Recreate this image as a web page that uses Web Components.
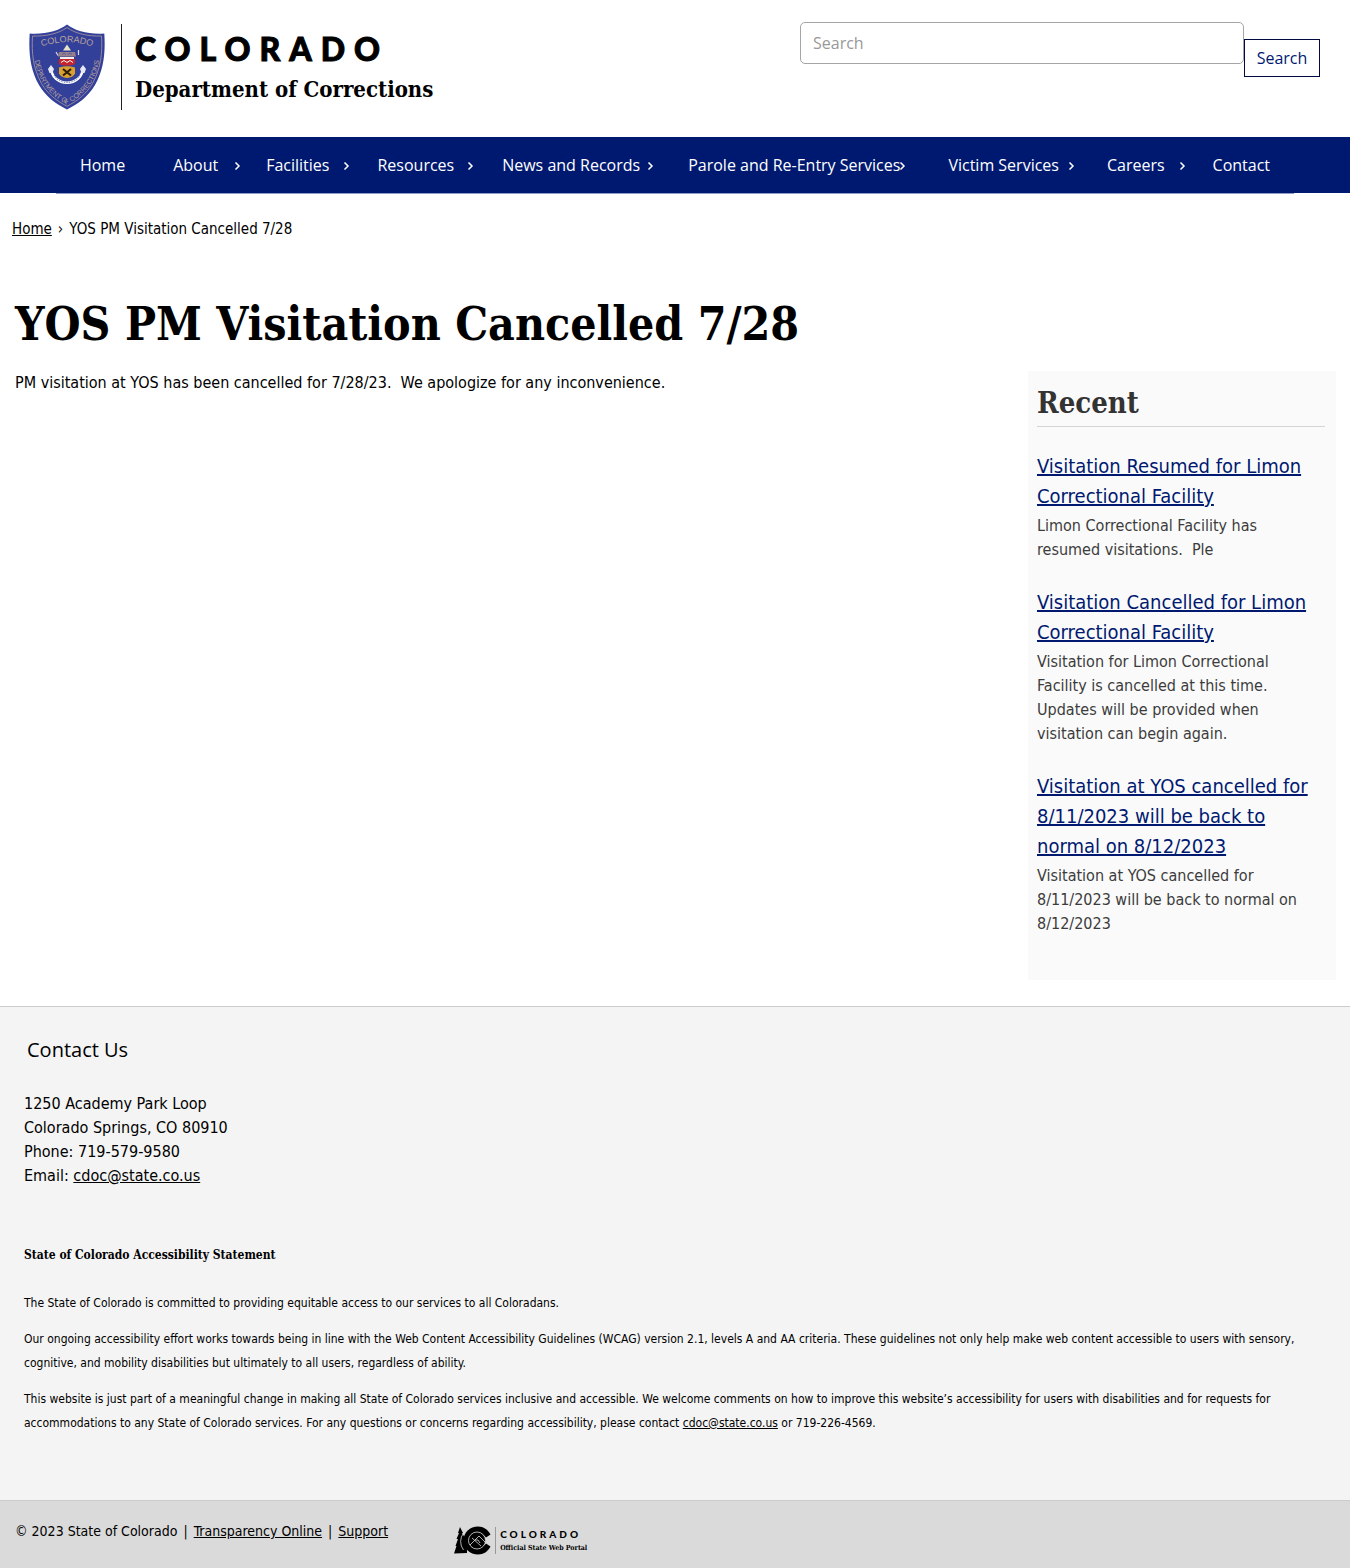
<!DOCTYPE html>
<html lang="en">
<head>
<meta charset="utf-8">
<title>YOS PM Visitation Cancelled 7/28 | Department of Corrections</title>
<style>
  body {
    margin: 0;
    background: #fff;
    color: #000;
    font: 16px/24px "DejaVu Sans Condensed", "Trebuchet MS", sans-serif;
    --sans: "Open Sans", sans-serif;
    --slab: "DejaVu Serif Condensed", "DejaVu Serif", serif;
    --navy: #001970;
  }
</style>
</head>
<body>
<site-page></site-page>

<template id="t-shield">
  <style>
    :host { display: block; width: 76px; height: 86px; flex: none; }
    svg { display: block; width: 100%; height: 100%; }
    text { font-family: "Liberation Sans", sans-serif; fill: #b8a29a; text-anchor: middle; }
  </style>
  <svg viewBox="0 0 76 86" role="img" aria-label="Colorado Department of Corrections badge">
    <defs>
      <path id="top" d="M7 24.500 Q22 18.500 38 18 Q54 18.500 69 24.500"/>
      <path id="around" d="M5 23 C4 48 16 70 38 80 C60 70 72 48 71 23"/>
    </defs>
    <path d="M38 .5 C30 7 16 10.500 .7 9.500 C-.5 28 1 45 10 61 C17 73 27 80 38 85.500 C49 80 59 73 66 61 C75 45 76.500 28 75.300 9.500 C60 10.500 46 7 38 .5Z" fill="#33409a"/>
    <path d="M38 3.500 C30 9.500 17 12.500 3.500 12 C2.500 29 4 44 12.500 59.500 C19 70.500 28 77 38 82.300 C48 77 57 70.500 63.500 59.500 C72 44 73.500 29 72.500 12 C59 12.500 46 9.500 38 3.500Z" fill="none" stroke="#96879f" stroke-width="1"/>
    <text font-size="9"><textPath href="#top" startOffset="50%">COLORADO</textPath></text>
    <text font-size="7"><textPath href="#around" startOffset="50%">DEPARTMENT OF CORRECTIONS</textPath></text>
    <path d="M22 43 C22 64 54 64 54 43" fill="none" stroke="#fff" stroke-width="2.500"/>
    <path d="M25 51 C30 61 46 61 51 51" fill="none" stroke="#33409a" stroke-width=".6" stroke-dasharray="1.500 1"/>
    <path d="M19 45 l3-4 3 4 -1.500 4 h-3z M51 45 l3-4 3 4 -1.500 4 h-3z" fill="#e6e9f5"/>
    <path d="M38 20.500 l4 6 h-8z" fill="#e8e2c8"/>
    <path d="M30 28 h16 l1 4.500 h-18z" fill="#97808a"/>
    <path d="M33 30.500 l2-1.500 2 1.500 M39 30.500 l2-1.500 2 1.500" fill="none" stroke="#5660a5" stroke-width="1"/>
    <path d="M27 28 l2 3.500 M49.500 26 v5" stroke="#d8d8ee" stroke-width="1.200"/>
    <path d="M31 33 h14 v2 h-14z" fill="#f5f0f0"/>
    <path d="M30 35 h16 v5 c-5 2-11 2-16 0z" fill="#c7242c"/>
    <path d="M32 38.500 l3-2 3 2 3-2 3 2" fill="none" stroke="#fff" stroke-width="1"/>
    <path d="M30 43.500 q8-2.500 16 0 v6 q-2 4-8 4.500 q-6-.5-8-4.500z" fill="#d9a02e"/>
    <path d="M34 45 l8 6.500 M42 45 l-8 6.500" stroke="#2a1c10" stroke-width="2"/>
  </svg>
</template>

<template id="t-brand">
  <style>
    :host { display: block; }
    a { display: flex; color: #000; text-decoration: none; }
    .words { margin-left: 16px; padding-left: 13px; border-left: 1px solid #222; display: flex; flex-direction: column; gap: 4px; }
    .state { font: 900 32px/40px Lato, sans-serif; letter-spacing: 9px; padding-top: 5px; -webkit-text-stroke: 1px #000; }
    .dept { font: bold 22px/32px var(--slab); white-space: nowrap; }
  </style>
  <a href="#">
    <state-shield></state-shield>
    <span class="words"><span class="state">COLORADO</span><span class="dept">Department of Corrections</span></span>
  </a>
</template>

<template id="t-search">
  <style>
    :host { display: block; flex: 0 1 520px; }
    form { display: flex; align-items: flex-start; }
    input { flex: 1; min-width: 0; box-sizing: border-box; height: 42px; padding: 0 12px; border: 1px solid #a5a5a5; border-radius: 5px; background: #fff; font: 16px var(--sans); }
    input::placeholder { color: #999; opacity: 1; }
    button { width: 76px; height: 38px; margin-top: 17px; padding: 0; border: 1px solid #000940; background: #fff; color: var(--navy); font: 16px var(--sans); }
  </style>
  <form role="search" onsubmit="return false">
    <input type="search" placeholder="Search" aria-label="Search">
    <button type="submit">Search</button>
  </form>
</template>

<template id="t-header">
  <style>
    :host { display: flex; justify-content: space-between; align-items: flex-start; box-sizing: border-box; height: 137px; padding: 22px 30px 0 29px; }
    site-brand { padding-top: 2px; }
  </style>
  <site-brand></site-brand>
  <site-search></site-search>
</template>

<template id="t-nav-item">
  <style>
    :host { display: block; position: relative; }
    a { display: block; padding: 0 24px; font: 16px/56px var(--sans); color: #fff; text-decoration: none; white-space: nowrap; }
    svg { display: none; position: absolute; left: 90%; top: 24px; width: 8px; height: 10px; }
    :host([menu]) svg { display: block; }
  </style>
  <a href="#"><slot></slot></a>
  <svg viewBox="0 0 8 10" aria-hidden="true"><path d="M2.500 1.500 L6 5 L2.500 8.500" fill="none" stroke="#fff" stroke-width="1.500"/></svg>
</template>

<template id="t-nav">
  <style>
    :host { display: block; background: linear-gradient(var(--navy), var(--navy)) 0 0 / 100% 56px no-repeat; }
    nav { display: flex; justify-content: center; width: fit-content; margin: 0 auto; border-bottom: 1px solid #8f9bc4; }
  </style>
  <nav aria-label="Main">
    <nav-item>Home</nav-item>
    <nav-item menu>About</nav-item>
    <nav-item menu>Facilities</nav-item>
    <nav-item menu>Resources</nav-item>
    <nav-item menu>News and Records</nav-item>
    <nav-item menu>Parole and Re-Entry Services</nav-item>
    <nav-item menu>Victim Services</nav-item>
    <nav-item menu>Careers</nav-item>
    <nav-item>Contact</nav-item>
  </nav>
</template>

<template id="t-crumbs">
  <style>
    :host { display: block; padding: 23px 12px; font-size: 15px; }
    nav { display: flex; gap: 6px; }
    a { color: #000; }
  </style>
  <nav aria-label="Breadcrumb"><a href="#">Home</a><span>›</span><span>YOS PM Visitation Cancelled 7/28</span></nav>
</template>

<template id="t-recent-item">
  <style>
    :host { display: block; margin-bottom: 25px; }
    h3 { margin: 0 0 3px; font-size: 20px; line-height: 30px; font-weight: normal; }
    a { color: var(--navy); }
    p { margin: 0; padding-right: 12px; color: #3c3c3c; }
  </style>
  <h3><a href="#"><slot name="title"></slot></a></h3>
  <p><slot></slot></p>
</template>

<template id="t-recent">
  <style>
    :host { display: block; background: #fafafa; padding: 12px 11px 19px 9px; }
    h2 { margin: 0 0 24px; padding-bottom: 3px; border-bottom: 1px solid #d4d4d4; font: bold 29px/40px var(--slab); color: #333; }
  </style>
  <h2>Recent</h2>
  <recent-item><span slot="title">Visitation Resumed for Limon Correctional Facility</span>Limon Correctional Facility has resumed visitations.&nbsp; Ple</recent-item>
  <recent-item><span slot="title">Visitation Cancelled for Limon Correctional Facility</span>Visitation for Limon Correctional Facility is cancelled at this time. Updates will be provided when visitation can begin again.</recent-item>
  <recent-item><span slot="title">Visitation at YOS cancelled for 8/11/2023 will be back to normal on 8/12/2023</span>Visitation at YOS cancelled for 8/11/2023 will be back to normal on 8/12/2023</recent-item>
</template>

<template id="t-contact">
  <style>
    :host { display: block; padding: 28px 24px 65px; border-top: 1px solid #ccc; background: #f4f4f4; }
    h2 { margin: 0 0 27px; padding-left: 3px; font: 20px/30px var(--sans); }
    address { font-style: normal; }
    h3 { margin: 55px 0 24px; font: bold 12px/24px var(--slab); }
    p { margin: 0 0 12px; font-size: 12px; }
    p:last-child { margin-bottom: 0; }
    a { color: #000; }
  </style>
  <h2>Contact Us</h2>
  <address>1250 Academy Park Loop<br>Colorado Springs, CO 80910<br>Phone: 719-579-9580<br>Email: <a href="#">cdoc@state.co.us</a></address>
  <h3>State of Colorado Accessibility Statement</h3>
  <p>The State of Colorado is committed to providing equitable access to our services to all Coloradans.</p>
  <p>Our ongoing accessibility effort works towards being in line with the Web Content Accessibility Guidelines (WCAG) version 2.1, levels A and AA criteria. These guidelines not only help make web content accessible to users with sensory, cognitive, and mobility disabilities but ultimately to all users, regardless of ability.</p>
  <p>This website is just part of a meaningful change in making all State of Colorado services inclusive and accessible. We welcome comments on how to improve this website’s accessibility for users with disabilities and for requests for accommodations to any State of Colorado services. For any questions or concerns regarding accessibility, please contact <a href="#">cdoc@state.co.us</a> or 719-226-4569.</p>
</template>

<template id="t-portal">
  <style>
    :host { display: block; }
    a { display: flex; align-items: center; color: #000; text-decoration: none; }
    svg { width: 37px; height: 29px; }
    .words { display: flex; flex-direction: column; margin-left: 4px; padding-left: 4px; border-left: 1px solid #999; white-space: nowrap; }
    .state { font: 900 10px/15px Lato, sans-serif; letter-spacing: 3px; }
    .sub { font: bold 7px/12px var(--slab); }
  </style>
  <a href="#">
    <svg viewBox="0 0 37 29" aria-hidden="true">
      <path d="M6 1 L9 7 L8 7 L11 12 L13 12 L13 27 L0 27.500 L2.500 20 L1.500 20 L4 13 L2.500 13 L5 7 L4 7Z"/>
      <path d="M36.500 8.500 L32 11.500 C30 8.500 27 7.500 24 8 C20 9 18 12 18.500 15.500 C19 19 22 21 25 21 C28 21 30.500 19.500 32 17.500 L36.500 20.500 C34 25.500 29.500 28.500 24 28.500 C16 28.500 9.500 22.500 9.500 14.500 C9.500 6.500 16 .5 24 .5 C29.500 .5 34 3.500 36.500 8.500Z"/>
      <circle cx="23" cy="14.500" r="8.500" stroke="#dadada" stroke-width=".8"/>
      <path d="M9.500 24 A14 14 0 0 1 9.500 7" fill="none" stroke="#dadada" stroke-width=".8"/>
      <path d="M16 19 L25 10 L31 16 M18 12 L27 20 M21 14 L24 14 L26 17" fill="none" stroke="#dadada" stroke-width=".8"/>
    </svg>
    <span class="words"><span class="state">COLORADO</span><span class="sub">Official State Web Portal</span></span>
  </a>
</template>

<template id="t-legal">
  <style>
    :host { display: flex; align-items: flex-start; min-height: 49px; padding: 18px 15px 0; border-top: 1px solid #ccc; background: #dadada; font-size: 14px; }
    nav { display: flex; gap: 6px; }
    nav a { color: #000; }
    state-portal { margin: 7px 0 0 66px; }
  </style>
  <nav aria-label="Legal"><span>© 2023 State of Colorado</span><span>|</span><a href="#">Transparency Online</a><span>|</span><a href="#">Support</a></nav>
  <state-portal></state-portal>
</template>

<template id="t-page">
  <style>
    :host { display: block; }
    h1 { margin: 0; padding: 30px 15px 17px; font: bold 46px/60px var(--slab); }
    main { display: flex; justify-content: space-between; gap: 40px; padding: 0 14px 26px 15px; }
    article p { margin: 0; }
    recent-posts { flex: 0 0 288px; }
  </style>
  <site-header></site-header>
  <site-nav></site-nav>
  <bread-crumbs></bread-crumbs>
  <h1>YOS PM Visitation Cancelled 7/28</h1>
  <main>
    <article><p>PM visitation at YOS has been cancelled for 7/28/23.&nbsp; We apologize for any inconvenience.</p></article>
    <recent-posts></recent-posts>
  </main>
  <contact-footer></contact-footer>
  <legal-bar></legal-bar>
</template>

<script>
  const define = (name, templateId) => customElements.define(name, class extends HTMLElement {
    constructor() {
      super();
      this.attachShadow({ mode: 'open' })
        .append(document.getElementById(templateId).content.cloneNode(true));
    }
  });
  define('state-shield', 't-shield');
  define('site-brand', 't-brand');
  define('site-search', 't-search');
  define('site-header', 't-header');
  define('nav-item', 't-nav-item');
  define('site-nav', 't-nav');
  define('bread-crumbs', 't-crumbs');
  define('recent-item', 't-recent-item');
  define('recent-posts', 't-recent');
  define('contact-footer', 't-contact');
  define('state-portal', 't-portal');
  define('legal-bar', 't-legal');
  define('site-page', 't-page');
</script>
</body>
</html>
